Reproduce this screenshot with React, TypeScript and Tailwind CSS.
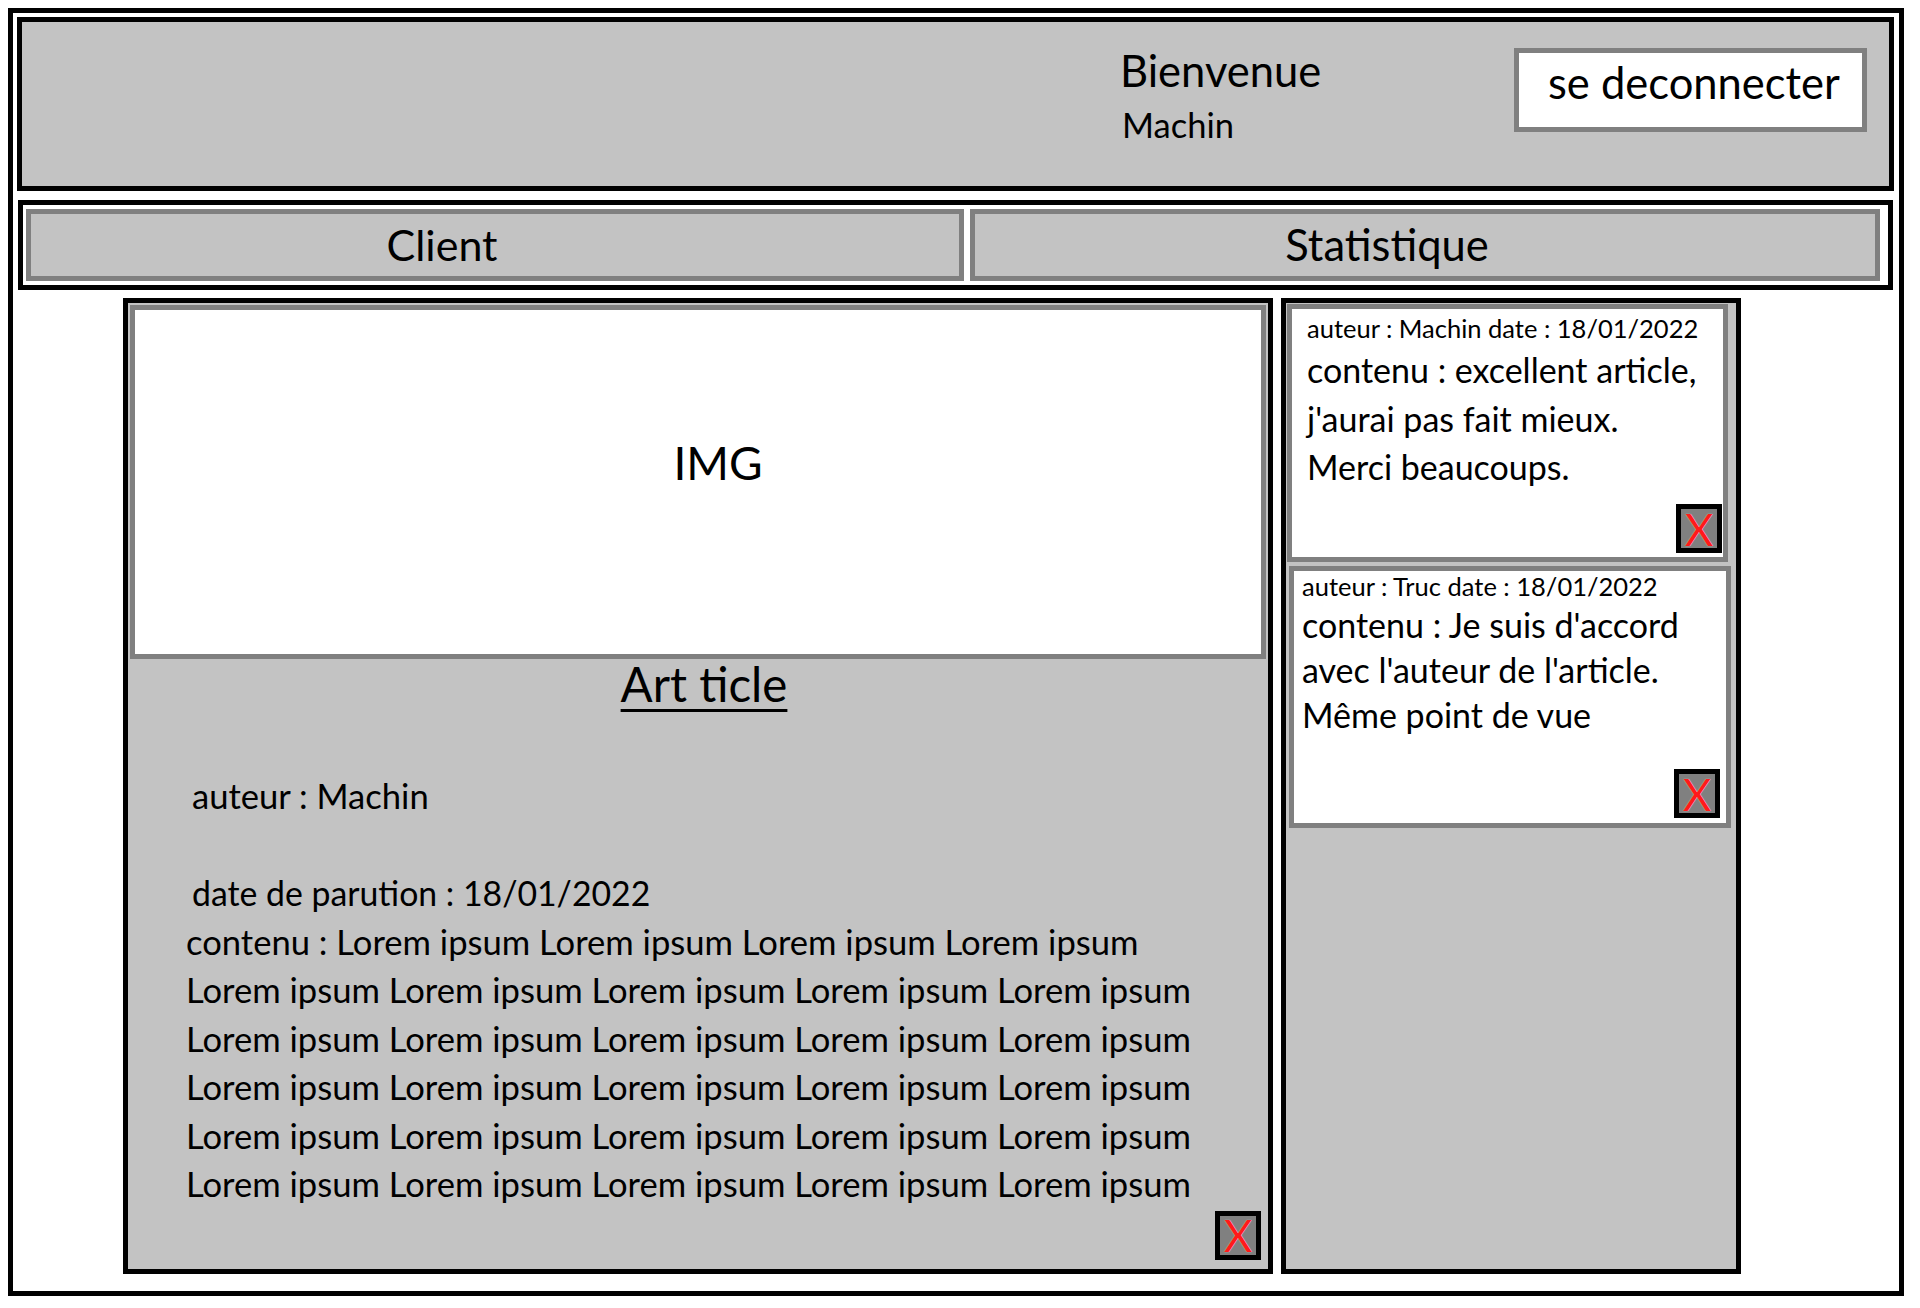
const loremLines = [
  "contenu : Lorem ipsum Lorem ipsum Lorem ipsum Lorem ipsum",
  "Lorem ipsum Lorem ipsum Lorem ipsum Lorem ipsum Lorem ipsum",
  "Lorem ipsum Lorem ipsum Lorem ipsum Lorem ipsum Lorem ipsum",
  "Lorem ipsum Lorem ipsum Lorem ipsum Lorem ipsum Lorem ipsum",
  "Lorem ipsum Lorem ipsum Lorem ipsum Lorem ipsum Lorem ipsum",
  "Lorem ipsum Lorem ipsum Lorem ipsum Lorem ipsum Lorem ipsum",
];

const DeleteButton = ({ className = "" }: { className?: string }) => (
  <button
    className={`w-[46px] h-[49px] border-[5px] border-black bg-[#808080] flex items-center justify-center text-[44px] leading-none text-[#ff1a1a] [text-shadow:0_0_1px_#ffffff] ${className}`}
  >
    X
  </button>
);

const Comment = ({
  meta,
  lines,
  className,
  bodyClass,
  padClass,
  xClass,
}: {
  meta: string;
  lines: string[];
  className: string;
  bodyClass: string;
  padClass: string;
  xClass: string;
}) => (
  <div className={`border-[5px] border-[#808080] bg-white flex flex-col ${padClass} ${className}`}>
    <p className="text-[25.5px] leading-[31px] text-black whitespace-nowrap">{meta}</p>
    <div className={bodyClass}>
      {lines.map((l) => (
        <p key={l} className="text-[34px] whitespace-nowrap">
          {l}
        </p>
      ))}
    </div>
    <DeleteButton className={`mt-auto self-end ${xClass}`} />
  </div>
);

const App = () => {
  return (
    <div className="w-[1920px] h-[1308px] bg-white p-2 font-[Lato,sans-serif] text-black">
      <div className="w-[1896px] border-[5px] border-black pl-[4px] pr-[5px] pt-[4px] pb-[17px]">
        {/* header */}
        <header className="h-[174px] border-[5px] border-black bg-[#c3c3c3] flex items-start">
          <div className="flex-1" />
          <div className="w-[394px] pt-[23px]">
            <p className="text-[43.5px] leading-[51px]">Bienvenue</p>
            <p className="text-[34.5px] leading-[39px] mt-[9px] ml-[2px]">Machin</p>
          </div>
          <button className="mt-[26px] mr-[22px] w-[353px] h-[84px] border-[5px] border-[#808080] bg-white text-left pl-[29px] pt-[5px] flex items-start">
            <span className="text-[43.5px] leading-[48px]">se deconnecter</span>
          </button>
        </header>

        {/* nav */}
        <nav className="mt-[9px] mx-[1px] h-[90px] border-[5px] border-black flex gap-[6px] pl-[3px] pr-[8px] py-[4px]">
          <div className="w-[938px] border-[5px] border-[#808080] bg-[#c3c3c3] flex items-center justify-center pr-[106px] text-[43px]">
            Client
          </div>
          <div className="flex-1 border-[5px] border-[#808080] bg-[#c3c3c3] flex items-center justify-center pr-[76px] text-[43.5px]">
            Statistique
          </div>
        </nav>

        {/* body */}
        <div className="mt-[8px] h-[976px] flex gap-[8px] pl-[106px]">
          <article className="w-[1150px] border-[5px] border-black bg-[#c3c3c3] flex flex-col">
            <div className="mt-[2px] mx-[2px] h-[354px] border-[5px] border-[#808080] bg-white flex items-center justify-center pl-[40px] pb-[40px]">
              <span className="text-[46px]">IMG</span>
            </div>
            <h2 className="text-center pl-[12px] text-[47.5px] leading-[50px] underline decoration-[3px] underline-offset-[7px]">
              Art ticle
            </h2>
            <div className="mt-[63px] pl-[58px] text-[34.6px] leading-[48.5px] whitespace-nowrap">
              <p className="ml-[6px]">auteur : Machin</p>
              <p className="ml-[6px] mt-[48.5px] text-[33.8px]">date de parution : 18/01/2022</p>
              {loremLines.map((l, i) => (
                <p key={i}>{l}</p>
              ))}
            </div>
            <DeleteButton className="self-end mt-[2px] mr-[7px]" />
          </article>

          <aside className="w-[460px] border-[5px] border-black bg-[#c3c3c3] flex flex-col">
            <Comment
              meta="auteur : Machin date : 18/01/2022"
              lines={["contenu : excellent article,", "j'aurai pas fait mieux.", "Merci beaucoups."]}
              className="mt-[1px] ml-[1px] w-[441px] h-[258px]"
              padClass="pt-[4px] pl-[15px]"
              bodyClass="mt-[2px] leading-[48.5px]"
              xClass="mb-[4px] mr-[1px]"
            />
            <Comment
              meta="auteur : Truc date : 18/01/2022"
              lines={["contenu : Je suis d'accord", "avec l'auteur de l'article.", "Même point de vue"]}
              className="mt-[4px] ml-[3px] w-[442px] h-[262px]"
              padClass="pt-[0px] pl-[8px]"
              bodyClass="mt-[0px] leading-[45px]"
              xClass="mb-[5px] mr-[6px]"
            />
          </aside>
        </div>
      </div>
    </div>
  );
};

export default App;
